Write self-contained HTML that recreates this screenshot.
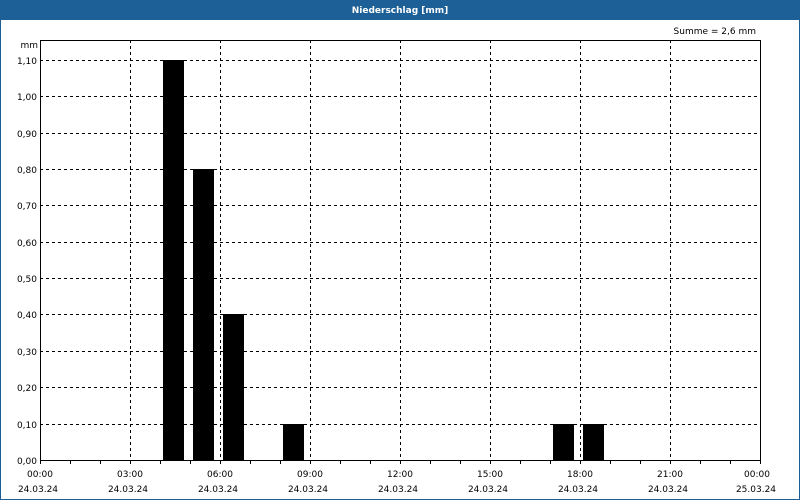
<!DOCTYPE html>
<html><head><style>
body{margin:0;width:800px;height:500px;overflow:hidden;background:#fff;font-family:"DejaVu Sans","Liberation Sans",sans-serif;}
</style></head><body>
<svg width="800" height="500" xmlns="http://www.w3.org/2000/svg" font-family="DejaVu Sans, Liberation Sans, sans-serif" font-size="9">
<rect x="0" y="0" width="800" height="500" fill="#fff"/>
<rect x="0" y="0" width="800" height="20" fill="#1d6097"/>
<rect x="0" y="0" width="1" height="500" fill="#1d6097"/>
<rect x="799" y="0" width="1" height="500" fill="#1d6097"/>
<rect x="0" y="499" width="800" height="1" fill="#1d6097"/>
<text x="400" y="13" fill="#fff" font-weight="bold" text-anchor="middle">Niederschlag [mm]</text>
<text x="756" y="34" text-anchor="end" fill="#000">Summe = 2,6 mm</text>
<text x="38" y="48" text-anchor="end">mm</text>
<g stroke="#000" stroke-width="1" stroke-dasharray="3,3" shape-rendering="crispEdges">
<line x1="40" y1="60.5" x2="760" y2="60.5"/>
<line x1="40" y1="96.5" x2="760" y2="96.5"/>
<line x1="40" y1="133.5" x2="760" y2="133.5"/>
<line x1="40" y1="169.5" x2="760" y2="169.5"/>
<line x1="40" y1="205.5" x2="760" y2="205.5"/>
<line x1="40" y1="242.5" x2="760" y2="242.5"/>
<line x1="40" y1="278.5" x2="760" y2="278.5"/>
<line x1="40" y1="314.5" x2="760" y2="314.5"/>
<line x1="40" y1="351.5" x2="760" y2="351.5"/>
<line x1="40" y1="387.5" x2="760" y2="387.5"/>
<line x1="40" y1="424.5" x2="760" y2="424.5"/>
<line x1="130.5" y1="40" x2="130.5" y2="460"/>
<line x1="220.5" y1="40" x2="220.5" y2="460"/>
<line x1="310.5" y1="40" x2="310.5" y2="460"/>
<line x1="400.5" y1="40" x2="400.5" y2="460"/>
<line x1="490.5" y1="40" x2="490.5" y2="460"/>
<line x1="580.5" y1="40" x2="580.5" y2="460"/>
<line x1="670.5" y1="40" x2="670.5" y2="460"/>
</g>
<g fill="#000" shape-rendering="crispEdges">
<rect x="163" y="60" width="21" height="400"/>
<rect x="193" y="169" width="21" height="291"/>
<rect x="223" y="314" width="21" height="146"/>
<rect x="283" y="424" width="21" height="36"/>
<rect x="553" y="424" width="21" height="36"/>
<rect x="583" y="424" width="21" height="36"/>
</g>
<rect x="40.5" y="40.5" width="720" height="420" fill="none" stroke="#000" shape-rendering="crispEdges"/>
<g stroke="#000" shape-rendering="crispEdges">
<line x1="40.5" y1="460" x2="40.5" y2="464"/><line x1="70.5" y1="460" x2="70.5" y2="464"/><line x1="100.5" y1="460" x2="100.5" y2="464"/><line x1="130.5" y1="460" x2="130.5" y2="464"/><line x1="160.5" y1="460" x2="160.5" y2="464"/><line x1="190.5" y1="460" x2="190.5" y2="464"/><line x1="220.5" y1="460" x2="220.5" y2="464"/><line x1="250.5" y1="460" x2="250.5" y2="464"/><line x1="280.5" y1="460" x2="280.5" y2="464"/><line x1="310.5" y1="460" x2="310.5" y2="464"/><line x1="340.5" y1="460" x2="340.5" y2="464"/><line x1="370.5" y1="460" x2="370.5" y2="464"/><line x1="400.5" y1="460" x2="400.5" y2="464"/><line x1="430.5" y1="460" x2="430.5" y2="464"/><line x1="460.5" y1="460" x2="460.5" y2="464"/><line x1="490.5" y1="460" x2="490.5" y2="464"/><line x1="520.5" y1="460" x2="520.5" y2="464"/><line x1="550.5" y1="460" x2="550.5" y2="464"/><line x1="580.5" y1="460" x2="580.5" y2="464"/><line x1="610.5" y1="460" x2="610.5" y2="464"/><line x1="640.5" y1="460" x2="640.5" y2="464"/><line x1="670.5" y1="460" x2="670.5" y2="464"/><line x1="700.5" y1="460" x2="700.5" y2="464"/><line x1="730.5" y1="460" x2="730.5" y2="464"/><line x1="760.5" y1="460" x2="760.5" y2="464"/>
</g>
<g text-anchor="end">
<text x="37" y="64">1,10</text><text x="37" y="100">1,00</text><text x="37" y="137">0,90</text><text x="37" y="173">0,80</text><text x="37" y="209">0,70</text><text x="37" y="246">0,60</text><text x="37" y="282">0,50</text><text x="37" y="318">0,40</text><text x="37" y="355">0,30</text><text x="37" y="391">0,20</text><text x="37" y="428">0,10</text><text x="37" y="464">0,00</text>
</g>
<g text-anchor="middle">
<text x="40" y="477">00:00</text><text x="130" y="477">03:00</text><text x="220" y="477">06:00</text><text x="310" y="477">09:00</text><text x="400" y="477">12:00</text><text x="490" y="477">15:00</text><text x="580" y="477">18:00</text><text x="670" y="477">21:00</text><text x="757" y="477">00:00</text>
<text x="38" y="492">24.03.24</text><text x="128" y="492">24.03.24</text><text x="218" y="492">24.03.24</text><text x="308" y="492">24.03.24</text><text x="398" y="492">24.03.24</text><text x="488" y="492">24.03.24</text><text x="578" y="492">24.03.24</text><text x="668" y="492">24.03.24</text><text x="756" y="492">25.03.24</text>
</g>
</svg>
</body></html>
